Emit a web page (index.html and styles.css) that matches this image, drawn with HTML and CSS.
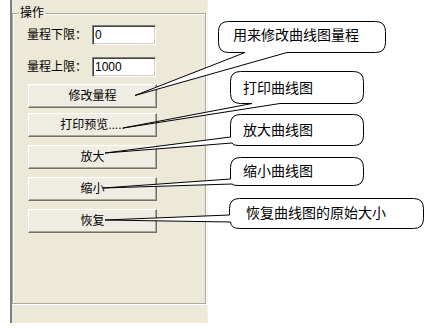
FILE: index.html
```html
<!DOCTYPE html>
<html lang="zh-CN">
<head>
  <meta charset="UTF-8">
  <title>操作</title>
  <link rel="stylesheet" href="styles.css">
</head>
<body>

  <div class="panel">
    <fieldset class="group">
      <legend>操作</legend>
      <div class="row">
        <label for="low">量程下限：</label>
        <input type="text" id="low" class="field" value="0">
      </div>
      <div class="row row-next">
        <label for="high">量程上限：</label>
        <input type="text" id="high" class="field" value="1000">
      </div>

      <button class="btn btn-first">修改量程</button>
      <button class="btn btn-second">打印预览.....</button>
      <button class="btn">放大</button>
      <button class="btn">缩小</button>
      <button class="btn">恢复</button>
    </fieldset>
  </div>

  <!-- balloon notes over the panel -->
  <svg class="notes" width="431" height="329" viewBox="0 0 431 329">
    <path d="M228.5,21.5 H375.5 Q385.5,21.5 385.5,31.5 V42.5 Q385.5,52.5 375.5,52.5 H287 L135,95.5 L245,52.5 H228.5 Q218.5,52.5 218.5,42.5 V31.5 Q218.5,21.5 228.5,21.5 Z"/>
    <path d="M240.5,71.5 H353.5 Q363.5,71.5 363.5,81.5 V93.5 Q363.5,103.5 353.5,103.5 H280 L123,128 L252,103.5 H240.5 Q230.5,103.5 230.5,93.5 V81.5 Q230.5,71.5 240.5,71.5 Z"/>
    <path d="M240.5,114.5 H353.5 Q363.5,114.5 363.5,124.5 V135.5 Q363.5,145.5 353.5,145.5 H238 Q233,145.5 232,143 L105,153 L230.5,137 V124.5 Q230.5,114.5 240.5,114.5 Z"/>
    <path d="M240.5,157.5 H353.5 Q363.5,157.5 363.5,167.5 V175.5 Q363.5,185.5 353.5,185.5 H238 Q233,185.5 232,184 L103,188 L230.5,179 V167.5 Q230.5,157.5 240.5,157.5 Z"/>
    <path d="M239.5,198.5 H413.5 Q423.5,198.5 423.5,208.5 V218.5 Q423.5,228.5 413.5,228.5 H239.5 Q231,228.5 230.5,222 L105,220 L229.5,215 V208.5 Q229.5,198.5 239.5,198.5 Z"/>
    <text x="233" y="40">用来修改曲线图量程</text>
    <text x="243" y="93">打印曲线图</text>
    <text x="243" y="135">放大曲线图</text>
    <text x="243" y="176">缩小曲线图</text>
    <text x="246" y="218">恢复曲线图的原始大小</text>
  </svg>

</body>
</html>
```

FILE: styles.css
```css
body {
  margin: 0;
  background-color: #fff;
  font-family: "Liberation Sans", "Noto Sans CJK SC", sans-serif;
  font-size: 12px;
  color: #000;
}

.panel {
  margin-left: 10px;
  width: 198px;
  height: 323px;
  padding-top: 6px;
  box-sizing: border-box;
  background-color: #ece9d8;
  border-left: 2px solid #808080;
  border-right: 1px solid #f3f1e8;
}

.group {
  margin: 0;
  width: 194px;
  height: 298px;
  padding: 0 0 0 6px;
  box-sizing: border-box;
  border: 1px solid #aca899;
  box-shadow: inset 1px 1px 0 #fff, 1px 1px 0 #fff;
}

.group legend {
  padding: 0 1px;
  line-height: 14px;
}

.row {
  display: flex;
  align-items: center;
  gap: 5px;
  height: 20px;
  margin-top: 5px;
  padding-left: 8px;
}

.row-next {
  margin-top: 12px;
}

.row label {
  width: 60px;
  line-height: 14px;
}

.field {
  width: 64px;
  height: 20px;
  margin: 0;
  padding: 0 2px;
  box-sizing: border-box;
  font: inherit;
  font-size: 12px;
  color: #000;
  background-color: #fff;
  border: 1px solid;
  border-color: #808080 #fff #fff #808080;
  box-shadow: inset 1px 1px 0 #404040, inset -1px -1px 0 #d4d0c8;
  outline: none;
}

.btn {
  display: block;
  width: 129px;
  height: 24px;
  margin: 8px 0 0 9px;
  padding: 0;
  font: inherit;
  font-size: 12px;
  line-height: 14px;
  color: #000;
  background-color: #efede3;
  border: 1px solid;
  border-color: #fff #716f64 #716f64 #fff;
  box-shadow: inset -1px -1px 0 #aca899;
}

.btn-first {
  margin-top: 7px;
}

.btn-second {
  margin-top: 5px;
}

.notes {
  position: absolute;
  top: 0;
  left: 0;
  pointer-events: none;
}

.notes path {
  fill: #fff;
  stroke: #000;
  stroke-width: 1;
}

.notes text {
  font-family: "Noto Sans CJK SC", sans-serif;
  font-size: 14px;
  fill: #000;
}
```
